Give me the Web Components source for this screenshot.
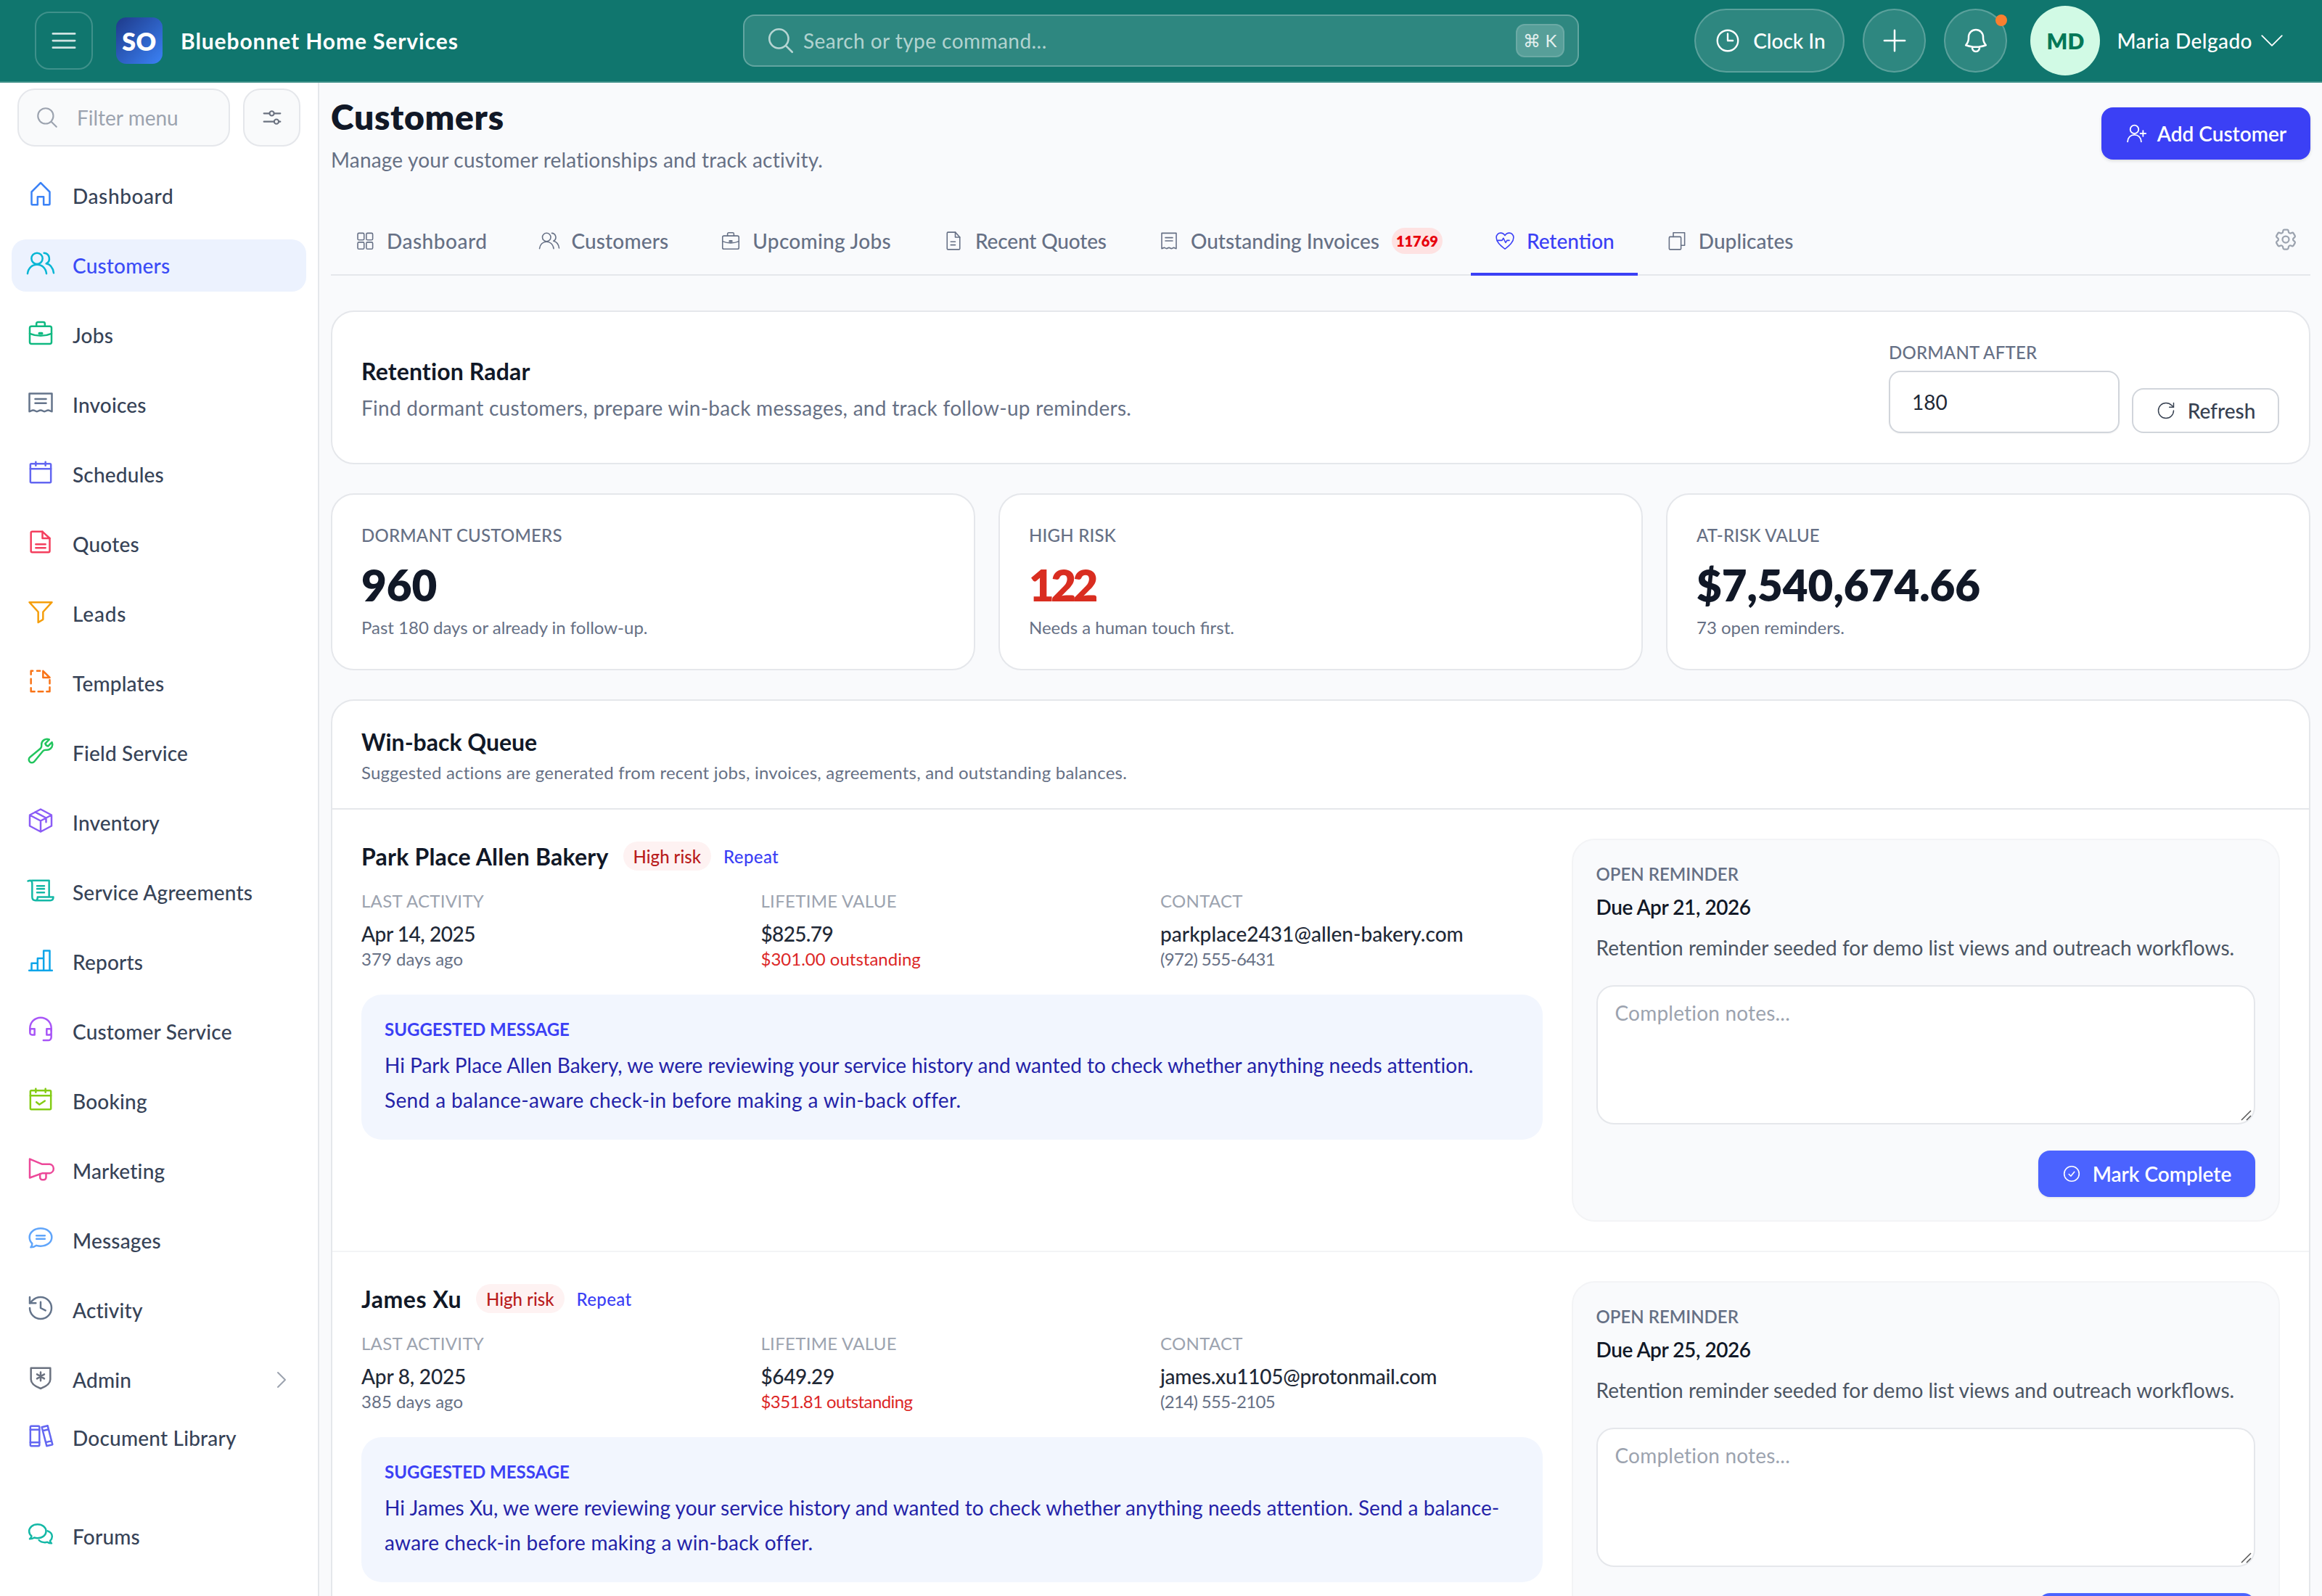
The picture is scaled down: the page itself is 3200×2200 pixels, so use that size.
<!DOCTYPE html>
<html lang="en"><head><meta charset="utf-8"><title>Customers</title>
<style>
html,body{margin:0;padding:0;height:2200px;overflow:hidden;background:#f9fafc}
body{font-family:Lato,"Liberation Sans",sans-serif;color:#111827}
</style></head><body>
<app-shell>
  <app-header slot="header" company="Bluebonnet Home Services" user="Maria Delgado" initials="MD"></app-header>
  <side-nav slot="side">
    <nav-item icon="home" color="#3b82f6" style="letter-spacing:.6px">Dashboard</nav-item>
    <nav-item icon="users" color="#06b6d4" active>Customers</nav-item>
    <nav-item icon="briefcase" color="#10b981">Jobs</nav-item>
    <nav-item icon="receipt" color="#64748b">Invoices</nav-item>
    <nav-item icon="calendar" color="#6366f1">Schedules</nav-item>
    <nav-item icon="doc" color="#f43f5e">Quotes</nav-item>
    <nav-item icon="funnel" color="#f59e0b" style="letter-spacing:.8px">Leads</nav-item>
    <nav-item icon="dashdoc" color="#f97316">Templates</nav-item>
    <nav-item icon="wrench" color="#22c55e">Field Service</nav-item>
    <nav-item icon="cube" color="#8b5cf6">Inventory</nav-item>
    <nav-item icon="scroll" color="#14b8a6">Service Agreements</nav-item>
    <nav-item icon="bars" color="#0ea5e9">Reports</nav-item>
    <nav-item icon="headset" color="#a855f7">Customer Service</nav-item>
    <nav-item icon="calcheck" color="#84cc16">Booking</nav-item>
    <nav-item icon="megaphone" color="#ec4899">Marketing</nav-item>
    <nav-item icon="chat" color="#60a5fa">Messages</nav-item>
    <nav-item icon="history" color="#64748b">Activity</nav-item>
    <nav-item icon="shield" color="#6b7280" chevron>Admin</nav-item>
    <nav-item icon="books" color="#6366f1" style="margin-top:-16px">Document Library</nav-item>
    <nav-item icon="forums" color="#14b8a6" style="margin-top:40px">Forums</nav-item>
  </side-nav>
  <page-head title="Customers" sub="Manage your customer relationships and track activity."></page-head>
  <tab-bar>
    <tab-item icon="grid" style="letter-spacing:.5px">Dashboard</tab-item>
    <tab-item icon="users" style="letter-spacing:.15px">Customers</tab-item>
    <tab-item icon="briefcase" style="letter-spacing:.3px">Upcoming Jobs</tab-item>
    <tab-item icon="doc2" style="letter-spacing:-.15px">Recent Quotes</tab-item>
    <tab-item icon="receipt2" badge="11769" style="letter-spacing:0">Outstanding Invoices</tab-item>
    <tab-item icon="heart" active style="letter-spacing:0">Retention</tab-item>
    <tab-item icon="copy" style="letter-spacing:.05px">Duplicates</tab-item>
  </tab-bar>
  <radar-card></radar-card>
  <stat-grid>
    <stat-card label="DORMANT CUSTOMERS" value="960" note="Past 180 days or already in follow-up."></stat-card>
    <stat-card label="HIGH RISK" value="122" note="Needs a human touch first." danger></stat-card>
    <stat-card label="AT-RISK VALUE" value="$7,540,674.66" note="73 open reminders."></stat-card>
  </stat-grid>
  <queue-card>
    <customer-row name="Park Place Allen Bakery" due="Due Apr 21, 2026">
      <meta-cell label="LAST ACTIVITY" value="Apr 14, 2025" sub="379 days ago" style="--ls:-.45px;--ss:.05px"></meta-cell>
      <meta-cell label="LIFETIME VALUE" value="$825.79" sub="$301.00 outstanding" red style="--ls:-.65px;--ss:0px"></meta-cell>
      <meta-cell label="CONTACT" value="parkplace2431@allen-bakery.com" sub="(972) 555-6431" style="--ls:.05px;--ss:-.65px"></meta-cell>
      <span slot="msg"><span style="letter-spacing:-.01px">Hi Park Place Allen Bakery, we were reviewing your service history and wanted to check whether anything needs attention.</span><br><span style="letter-spacing:.36px">Send a balance-aware check-in before making a win-back offer.</span></span>
    </customer-row>
    <customer-row name="James Xu" due="Due Apr 25, 2026" style="--nls:.55px">
      <meta-cell label="LAST ACTIVITY" value="Apr 8, 2025" sub="385 days ago" style="--ls:-.2px;--ss:.05px"></meta-cell>
      <meta-cell label="LIFETIME VALUE" value="$649.29" sub="$351.81 outstanding" red style="--ls:-.4px;--ss:-.6px"></meta-cell>
      <meta-cell label="CONTACT" value="james.xu1105@protonmail.com" sub="(214) 555-2105" style="--ls:-.25px;--ss:-.65px"></meta-cell>
      <span slot="msg"><span style="letter-spacing:.05px">Hi James Xu, we were reviewing your service history and wanted to check whether anything needs attention. Send a balance-</span><br><span style="letter-spacing:.25px">aware check-in before making a win-back offer.</span></span>
    </customer-row>
  </queue-card>
</app-shell>
<script>
const P={
 menu:'<path d="M3.75 6.75h16.5M3.75 12h16.5M3.75 17.25h16.5"/>',
 search:'<path d="m21 21-5.197-5.197m0 0A7.5 7.5 0 1 0 5.196 5.196a7.5 7.5 0 0 0 10.607 10.607Z"/>',
 sliders:'<path d="M4 8h5.5M14 8h6M4 16h10M18.5 16H20"/><circle cx="11.7" cy="8" r="2.2"/><circle cx="16.2" cy="16" r="2.2"/>',
 home:'<path d="M4.500 10.500 12 3l7.500 7.500V20.500a.6.6 0 0 1-.6.6H14.500v-6.600h-5v6.600H5.100a.6.6 0 0 1-.6-.6Z"/>',
 users:'<circle cx="9" cy="8" r="4.6"/><path d="M1.200 20.500c.5-4.600 3.700-7.500 7.800-7.500s7.300 2.900 7.800 7.500"/><path d="M14.800 3.500a4.600 4.600 0 0 1 1.800 8.700c3.400.7 5.600 3.700 6.200 7.800"/>',
 briefcase:'<rect x="3" y="6.500" width="18" height="14.500" rx="1.500"/><path d="M8.500 6.500V4.300c0-.7.5-1.300 1.300-1.300h4.400c.8 0 1.300.6 1.300 1.300v2.200M3 12.500c2.800 1.200 5.800 1.800 9 1.800s6.200-.6 9-1.800"/><path d="M11 12.300h2" stroke-width="2.200"/>',
 receipt:'<path d="M2.700 4.500h18.600v14.800c-1.600 0-1.600-1-3.100-1s-1.500 1-3.100 1-1.500-1-3.100-1-1.500 1-3.100 1-1.500-1-3.100-1-1.500 1-3.100 1Z"/><path d="M7.500 9h9M7.500 12.500h9"/>',
 calendar:'<rect x="3.500" y="5" width="17" height="15.500" rx=".8"/><path d="M3.500 9.200h17M8 3.500v3M16 3.500v3"/>',
 calcheck:'<rect x="3.500" y="5" width="17" height="15.500" rx=".8"/><path d="M3.500 9.200h17M8 3.500v3M16 3.500v3M8.500 14.500l2.500 2 4.500-3"/>',
 doc:'<path d="M5 3.500h8.500L19.500 9v10.500a1 1 0 0 1-1 1H5a1 1 0 0 1-1-1v-15a1 1 0 0 1 1-1Z"/><path d="M13.500 3.500V9h6M8 14h8M8 17h8"/>',
 dashdoc:'<path d="M5.500 3.500H4v3M4 10v4M4 17.500v3h3M10 20.500h4M17 20.500h2.500V17M19.500 14v-3M9 3.500h2.500"/><path d="M14 3.500 19.500 9H14Z"/>',
 funnel:'<path d="M2.700 4.300h18.600l-7.300 8v6.200l-4 2.500v-8.700Z"/>',
 wrench:'<path d="M21.750 6.750a4.500 4.500 0 0 1-4.884 4.484c-1.076-.091-2.264.071-2.950.904l-7.152 8.684a2.548 2.548 0 1 1-3.586-3.586l8.684-7.152c.833-.686.995-1.874.904-2.950a4.500 4.500 0 0 1 6.336-4.486l-3.276 3.276a3.004 3.004 0 0 0 2.250 2.250l3.276-3.276c.304.648.398 1.370.398 2.352Z"/>',
 cube:'<path d="M21 7.500 12 2.700 3 7.500v9l9 4.800 9-4.800ZM3 7.500l9 4.800 9-4.800M12 12.300v9M7.500 5l9 4.900v3.500"/>',
 scroll:'<path d="M1.500 4.500c2-.8 3.500-.5 3.500 2V17.500c0 1.800 1 3 2.800 3H20c1.600 0 2.500-1 2.500-2.800H9.500c0 1.500-.5 2.800-1.700 2.800M5 4h14v13.500M2 4.300C2.700 4 4 4 5 4"/><path d="M9 8.500h6M9 11h6M9 14h6"/>',
 bars:'<path d="M2.500 20.800h19M4.500 20.800v-6h5v6M9.500 20.800v-10h5v10M14.500 20.800V4.500h5v16.300"/>',
 headset:'<path d="M3.200 13V11a8.800 8.800 0 0 1 17.600 0v2"/><path d="M3.200 11.500H7v5H4.800a1.600 1.600 0 0 1-1.600-1.600ZM20.800 11.500H17v5h2.200a1.600 1.600 0 0 0 1.600-1.600V11.500ZM20.800 15v3.500a2.500 2.500 0 0 1-2.500 2.500h-4"/>',
 megaphone:'<path d="M3 4v15.500l10.500-3.800h6a3.800 3.800 0 0 0 0-7.500h-6.500Z"/><path d="M11.500 16.200v3a2 2 0 0 0 2 2h1a2 2 0 0 0 2-2v-3.500"/>',
 chat:'<path d="M12 3.800c5 0 9.200 2.900 9.200 7.300s-4.200 7.300-9.200 7.300c-1.200 0-2.400-.2-3.500-.5-1.300 1-2.900 1.500-4.700 1.500.8-.9 1.200-2 1.200-3.100C3.900 15.200 2.800 13.300 2.800 11.100 2.800 6.700 7 3.800 12 3.800Z"/><path d="M8.500 9.800h7M8.500 12.500h7"/>',
 history:'<path d="M3 12a9 9 0 1 0 9-9 9.750 9.750 0 0 0-6.740 2.740L3 8"/><path d="M3 3v5h5M12 7v5l4 2"/>',
 shield:'<path d="M4 4h16v9.500c0 3.800-4 6-8 7.500-4-1.500-8-3.700-8-7.500Z"/><path d="M12 7.500v7M9 9.200l6 3.600M15 9.200l-6 3.600"/>',
 books:'<rect x="3.500" y="4" width="7.500" height="16.500" rx=".8"/><path d="M3.500 7h7.500M3.500 17.500h7.500M13 5l4.800-1.200 4 15.500-4.800 1.200ZM13.800 8l4.800-1.200M16.500 17.500l4.500-1.200"/>',
 forums:'<path d="M9.500 3.800c-4 0-7 2.400-7 5.700 0 1.600.7 3 2 4-.2.900-.7 1.700-1.500 2.300 1.500 0 2.800-.4 3.800-1.100.8.300 1.700.4 2.700.4 4 0 7-2.400 7-5.600S13.500 3.800 9.500 3.800Z"/><path d="M17.800 9.200c2.200.8 3.700 2.600 3.700 4.600 0 1.400-.7 2.600-1.700 3.500.1.800.5 1.500 1.200 2.100-1.400 0-2.500-.3-3.400-1-.7.200-1.400.3-2.100.3-2 0-3.800-.7-4.900-1.900"/>',
 chev:'<path d="m8.250 4.500 7.500 7.500-7.500 7.500"/>',
 grid:'<rect x="4" y="3.500" width="7" height="7.500" rx="1.300"/><rect x="13.500" y="3.500" width="7" height="7.500" rx="1.300"/><rect x="4" y="13.500" width="7" height="7.500" rx="1.300"/><rect x="13.500" y="13.500" width="7" height="7.500" rx="1.300"/>',
 doc2:'<path d="M6 2.500h8l5 5.500v12.500a1 1 0 0 1-1 1H6a1 1 0 0 1-1-1v-17a1 1 0 0 1 1-1Z"/><path d="M14 2.500V8h5M9 13h5M9 16.500h5"/>',
 receipt2:'<path d="M4 3.500h16v17c-1.300 0-1.300-1-2.700-1s-1.300 1-2.600 1-1.400-1-2.700-1-1.400 1-2.700 1-1.300-1-2.600-1-1.400 1-2.700 1Z"/><path d="M8 8.500h8M8 12h8"/>',
 heart:'<path d="M12 21C6.500 16.500 2.500 13 2.500 8.300 2.500 5.300 4.700 3.300 7.300 3.300c1.900 0 3.600 1 4.700 2.800 1.100-1.800 2.800-2.800 4.700-2.800 2.600 0 4.800 2 4.800 5 0 4.700-4 8.200-9.500 12.700Z"/><path d="M4 11.500h4.800l1.500-2.500 2.400 5 1.600-2.500h2.500"/>',
 copy:'<rect x="3.500" y="7.500" width="13" height="14" rx="1"/><path d="M8 7.500V3h12.500v14H16.500"/>',
 clock:'<path d="M12 6v6h4.500m4.500 0a9 9 0 1 1-18 0 9 9 0 0 1 18 0Z"/>',
 plus:'<path d="M12 3.500v17M3.500 12h17"/>',
 bell:'<path d="M14.857 17.082a23.848 23.848 0 0 0 5.454-1.310A8.967 8.967 0 0 1 18 9.750V9A6 6 0 0 0 6 9v.750a8.967 8.967 0 0 1-2.312 6.022c1.733.640 3.560 1.085 5.455 1.310m5.714 0a24.255 24.255 0 0 1-5.714 0m5.714 0a3 3 0 1 1-5.714 0"/>',
 down:'<path d="m19.500 8.250-7.500 7.500-7.500-7.500"/>',
 refresh:'<path d="M21 12a9 9 0 1 1-9-9c2.520 0 4.930 1 6.740 2.740L21 8"/><path d="M21 3v5h-5"/>',
 useradd:'<circle cx="10" cy="7.500" r="4.600"/><path d="M2.500 21c.4-4.500 3.300-7.500 7.500-7.500s7.100 3 7.500 7.500M19.500 9v6M16.500 12h6"/>',
 check:'<circle cx="12" cy="12" r="9.500"/><path d="m8.500 12.500 2.500 2.500 4.500-5.500"/>',
 cog:'<path d="M9.594 3.940c.090-.542.560-.940 1.110-.940h2.593c.550 0 1.020.398 1.110.940l.213 1.281c.063.374.313.686.645.870.074.040.147.083.220.127.325.196.720.257 1.075.124l1.217-.456a1.125 1.125 0 0 1 1.370.490l1.296 2.247a1.125 1.125 0 0 1-.260 1.431l-1.003.827c-.293.241-.438.613-.430.992a7.723 7.723 0 0 1 0 .255c-.008.378.137.750.430.991l1.004.827c.424.350.534.955.260 1.430l-1.298 2.247a1.125 1.125 0 0 1-1.369.491l-1.217-.456c-.355-.133-.750-.072-1.076.124a6.470 6.470 0 0 1-.220.128c-.331.183-.581.495-.644.869l-.213 1.281c-.090.543-.560.940-1.110.940h-2.594c-.550 0-1.019-.398-1.110-.940l-.213-1.281c-.062-.374-.312-.686-.644-.870a6.520 6.520 0 0 1-.220-.127c-.325-.196-.720-.257-1.076-.124l-1.217.456a1.125 1.125 0 0 1-1.369-.490l-1.297-2.247a1.125 1.125 0 0 1 .260-1.431l1.004-.827c.292-.240.437-.613.430-.991a6.932 6.932 0 0 1 0-.255c.007-.380-.138-.751-.430-.992l-1.004-.827a1.125 1.125 0 0 1-.260-1.430l1.297-2.247a1.125 1.125 0 0 1 1.370-.491l1.216.456c.356.133.751.072 1.076-.124.072-.044.146-.086.220-.128.332-.183.582-.495.644-.869l.214-1.280Z"/><path d="M15 12a3 3 0 1 1-6 0 3 3 0 0 1 6 0Z"/>'
};
const define=(name,render)=>customElements.define(name,class extends HTMLElement{
  connectedCallback(){ if(this.shadowRoot) return; const r=this.attachShadow({mode:'open'}); r.innerHTML=render(this); }
});
const FF='Lato,"Liberation Sans",sans-serif';
define('ui-icon',h=>{
  const s=h.getAttribute('size')||40,c=h.getAttribute('color')||'currentColor',w=h.getAttribute('sw')||1.5;
  return `<style>:host{display:inline-flex;flex:none;width:${s}px;height:${s}px;color:${c}}svg{width:100%;height:100%;fill:none;stroke:currentColor;stroke-width:${w};stroke-linecap:round;stroke-linejoin:round;display:block}</style><svg viewBox="0 0 24 24">${P[h.getAttribute('name')]||''}</svg>`;
});
define('app-shell',()=>`<style>
:host{display:grid;width:3200px;height:2200px;grid-template-columns:440px 1fr;grid-template-rows:114px 1fr;overflow:hidden;background:#f9fafc;font-family:${FF}}
.h{grid-column:1/3;display:block}.s{display:block;min-height:0}
main{padding:0 16px;min-width:0;overflow:hidden;display:flex;flex-direction:column}
</style><div class="h"><slot name="header"></slot></div><div class="s"><slot name="side"></slot></div><main><slot></slot></main>`);
define('app-header',h=>`<style>
:host{display:flex;align-items:center;box-sizing:border-box;height:114px;background:#10766e;border-bottom:2px solid #3d8f88;color:#fff;font-family:${FF}}
.left{width:1024px;box-sizing:border-box;padding-left:48px;display:flex;align-items:center;flex:none}
.menu{width:80px;height:80px;box-sizing:border-box;border:2px solid rgba(255,255,255,.2);border-radius:20px;display:flex;align-items:center;justify-content:center;color:rgba(255,255,255,.8)}
.logo{width:64px;height:64px;margin-left:32px;border-radius:14px;background:linear-gradient(135deg,#1e3a8a,#3b82f6);display:flex;align-items:center;justify-content:center;font-weight:800;font-size:34px;letter-spacing:.5px}
.co{margin-left:25px;font-size:30px;font-weight:700;letter-spacing:.9px;white-space:nowrap}
.search{width:1152px;height:72px;flex:none;box-sizing:border-box;border:2px solid rgba(255,255,255,.25);background:rgba(255,255,255,.13);border-radius:16px;display:flex;align-items:center;padding:0 18px 0 29px;color:rgba(255,255,255,.65)}
.ph{margin-left:10px;font-size:28px;letter-spacing:.45px;flex:1}
.kbd{width:67px;height:46px;box-sizing:border-box;border:2px solid rgba(255,255,255,.12);background:rgba(255,255,255,.2);border-radius:12px;display:flex;align-items:center;justify-content:center;font-size:24px;color:rgba(255,255,255,.85)}
.right{margin-left:auto;padding-right:47px;display:flex;align-items:center;flex:none}
.pill{height:88px;box-sizing:border-box;border:2px solid rgba(255,255,255,.22);background:rgba(255,255,255,.13);border-radius:44px;display:flex;align-items:center;justify-content:center;position:relative}
.clock{width:207px;font-size:28px;font-weight:500;gap:16px}
.round{width:87px;margin-left:25px}
.dot{position:absolute;right:-2px;top:6px;width:16px;height:16px;border-radius:50%;background:#f97f2f}
.av{width:96px;height:96px;margin-left:32px;border-radius:50%;background:#d1fae5;color:#047857;font-weight:800;font-size:30px;display:flex;align-items:center;justify-content:center}
.name{margin-left:23px;font-size:28px;font-weight:500;white-space:nowrap;letter-spacing:.45px}
.ch{margin-left:5px}
</style>
<div class="left"><div class="menu"><ui-icon name="menu" size="44"></ui-icon></div><div class="logo">SO</div><div class="co">${h.getAttribute('company')}</div></div>
<div class="search"><ui-icon name="search" size="42"></ui-icon><div class="ph">Search or type command...</div><div class="kbd">⌘ K</div></div>
<div class="right"><div class="pill clock"><ui-icon name="clock" size="38"></ui-icon><span>Clock In</span></div>
<div class="pill round"><ui-icon name="plus" size="40"></ui-icon></div>
<div class="pill round"><ui-icon name="bell" size="40"></ui-icon><i class="dot"></i></div>
<div class="av">${h.getAttribute('initials')}</div><div class="name">${h.getAttribute('user')}</div><ui-icon class="ch" name="down" size="44" sw="1"></ui-icon></div>`);
define('side-nav',()=>`<style>
:host{display:block;box-sizing:border-box;width:440px;height:2086px;background:#fff;border-right:2px solid #e5e7eb;padding:8px 16px 0;overflow:hidden;font-family:${FF}}
.f{display:flex;gap:18px;padding:0 8px 0 8px;margin-bottom:32px}
.inp{width:293px;height:80px;box-sizing:border-box;border:2px solid #e5e7eb;background:#f9fafb;border-radius:24px;display:flex;align-items:center;padding-left:22px;color:#9ca3af;font-size:28px;gap:24px}
.btn{width:79px;height:80px;box-sizing:border-box;border:2px solid #e5e7eb;background:#f9fafb;border-radius:24px;display:flex;align-items:center;justify-content:center;color:#6b7280}
nav{display:flex;flex-direction:column;gap:24px}
</style><div class="f"><div class="inp"><ui-icon name="search" size="34" color="#9ca3af"></ui-icon><span>Filter menu</span></div><div class="btn"><ui-icon name="sliders" size="34" color="#6b7280"></ui-icon></div></div><nav><slot></slot></nav>`);
define('nav-item',h=>`<style>
:host{display:flex;align-items:center;height:72px;box-sizing:border-box;padding-left:20px;padding-right:18px;border-radius:20px;font-size:28px;font-weight:500;letter-spacing:.2px;color:#374357;${h.hasAttribute('active')?'background:#ecf2fe;color:#3b4cf6;':''}}
ui-icon{margin-right:24px;margin-top:-6px}
.c{margin:0 0 0 auto}
</style><ui-icon name="${h.getAttribute('icon')}" color="${h.getAttribute('color')}" size="40"></ui-icon><span><slot></slot></span>${h.hasAttribute('chevron')?'<ui-icon class="c" name="chev" size="32" color="#9ca3af"></ui-icon>':''}`);
define('page-head',h=>`<style>
:host{display:flex;justify-content:space-between;align-items:flex-start;height:170px;flex:none;font-family:${FF}}
h1{margin:19px 0 0;font-size:48px;line-height:56px;font-weight:800;color:#111827;letter-spacing:.7px}
p{margin:11px 0 0;font-size:28px;line-height:40px;color:#667085;letter-spacing:.2px}
.add{margin-top:34px;height:72px;width:288px;box-sizing:border-box;border-radius:16px;background:#3b40f5;color:#fff;font-size:28px;font-weight:600;display:flex;align-items:center;justify-content:center;gap:14px;box-shadow:0 2px 4px rgba(0,0,0,.12)}
</style><div><h1>${h.getAttribute('title')}</h1><p>${h.getAttribute('sub')}</p></div><div class="add"><ui-icon name="useradd" size="30" color="#fff"></ui-icon><span>Add Customer</span></div>`);
define('tab-bar',()=>`<style>
:host{display:flex;gap:7px;align-items:stretch;height:96px;box-sizing:border-box;border-bottom:2px solid #e5e7eb;font-family:${FF};flex:none}
.g{margin-left:auto;align-self:center;margin-right:16px;margin-top:-2px}
</style><slot></slot><ui-icon class="g" name="cog" size="36" color="#9ca3af"></ui-icon>`);
define('tab-item',h=>{const a=h.hasAttribute('active'),b=h.getAttribute('badge');return `<style>
:host{display:flex;align-items:center;height:96px;box-sizing:border-box;padding:0 32px;gap:15px;font-size:28px;font-weight:500;white-space:nowrap;letter-spacing:.35px;color:${a?'#3b40f5':'#667085'};${a?'border-bottom:4px solid #3b40f5;padding-top:4px;':''}}
.b{margin-left:2px;width:70px;height:36px;border-radius:18px;background:#fee2e2;color:#e7000b;font-size:20px;font-weight:800;display:flex;align-items:center;justify-content:center;letter-spacing:0}
</style><ui-icon name="${h.getAttribute('icon')}" size="30" sw="1.250"></ui-icon><span><slot></slot></span>${b?`<span class="b">${b}</span>`:''}`});
define('radar-card',()=>`<style>
:host{display:flex;justify-content:space-between;height:212px;box-sizing:border-box;margin-top:48px;background:#fff;border:2px solid #e5e7eb;border-radius:32px;padding:0 41px 0 40px;font-family:${FF};flex:none}
.l{align-self:center;padding-top:4px}
h2{margin:0 0 8px;font-size:32px;line-height:44px;font-weight:700;letter-spacing:.15px;color:#111827}
p{margin:0;font-size:28px;line-height:40px;color:#667085;letter-spacing:.28px}
.r{display:flex;align-items:flex-end;gap:17px;padding-bottom:41px}
label{display:block;font-size:24px;line-height:32px;font-weight:500;color:#667085;margin-bottom:9px;letter-spacing:.2px}
.i{width:318px;height:86px;box-sizing:border-box;border:2px solid #d1d5db;border-radius:16px;display:flex;align-items:center;padding-left:30px;font-size:28px;color:#1f2937;box-shadow:0 1px 2px rgba(0,0,0,.05)}
.b{width:203px;height:62px;box-sizing:border-box;border:2px solid #d1d5db;border-radius:16px;display:flex;align-items:center;justify-content:center;gap:16px;font-size:28px;font-weight:500;color:#374151}
</style><div class="l"><h2>Retention Radar</h2><p>Find dormant customers, prepare win-back messages, and track follow-up reminders.</p></div>
<div class="r"><div><label>DORMANT AFTER</label><div class="i">180</div></div><div class="b"><ui-icon name="refresh" size="28" sw="1.250"></ui-icon><span>Refresh</span></div></div>`);
define('stat-grid',()=>`<style>:host{display:grid;grid-template-columns:repeat(3,1fr);gap:32px;margin-top:40px;flex:none}</style><slot></slot>`);
define('stat-card',h=>`<style>
:host{display:block;height:244px;box-sizing:border-box;background:#fff;border:2px solid #e5e7eb;border-radius:32px;padding:40px 40px 0;font-family:${FF}}
.a{font-size:24px;line-height:32px;font-weight:500;color:#667085;letter-spacing:.2px}
.v{margin-top:16px;font-size:60px;line-height:72px;font-weight:800;color:${h.hasAttribute('danger')?'#d92d20':'#111827'};${h.hasAttribute('danger')?'letter-spacing:-4.5px;':''}}
.n{margin-top:7px;font-size:24px;line-height:32px;color:#667085}
</style><div class="a">${h.getAttribute('label')}</div><div class="v">${h.getAttribute('value')}</div><div class="n">${h.getAttribute('note')}</div>`);
define('queue-card',()=>`<style>
:host{display:block;margin-top:40px;background:#fff;border:2px solid #e5e7eb;border-radius:32px 32px 0 0;font-family:${FF};flex:none}
header{padding:35px 40px 33px;border-bottom:2px solid #e5e7eb}
h2{margin:0;font-size:32px;line-height:44px;font-weight:700;color:#111827}
p{margin:4px 0 0;font-size:24px;line-height:32px;color:#667085;letter-spacing:.22px}
</style><header><h2>Win-back Queue</h2><p>Suggested actions are generated from recent jobs, invoices, agreements, and outstanding balances.</p></header><slot></slot>`);
define('meta-cell',h=>`<style>
:host{display:block;min-width:0}
.a{font-size:24px;line-height:32px;color:#9ca3af;letter-spacing:.3px}
.v{margin-top:9px;font-size:28px;line-height:40px;font-weight:500;color:#1f2937;white-space:nowrap;letter-spacing:var(--ls,0)}
.s{font-size:24px;line-height:32px;color:${h.hasAttribute('red')?'#dc2626':'#667085'};margin-top:-1px;letter-spacing:var(--ss,0)}
</style><div class="a">${h.getAttribute('label')}</div><div class="v">${h.getAttribute('value')}</div><div class="s">${h.getAttribute('sub')}</div>`);
define('customer-row',h=>`<style>
:host{display:grid;grid-template-columns:5fr 3fr;gap:40px;padding:40px;border-bottom:2px solid #f3f4f6;font-family:${FF}}
.n{display:flex;align-items:center;height:52px;margin-top:-2px}
.t{font-size:32px;font-weight:700;color:#111827;margin-right:20px;letter-spacing:var(--nls,.22px)}
.r{height:40px;padding:0 14px;border-radius:20px;background:#fef2f2;color:#b91c1c;font-size:24px;font-weight:500;display:flex;align-items:center}
.p{margin-left:17px;color:#3b40f5;font-size:24px;font-weight:500;letter-spacing:.4px}
.m{display:grid;grid-template-columns:repeat(3,1fr);gap:24px;margin-top:20px}
.box{margin-top:33px;height:200px;box-sizing:border-box;background:#f2f6fe;border-radius:28px;padding:32px}
.bt{font-size:24px;line-height:32px;font-weight:700;color:#3b40f5}
.bm{margin-top:9px;font-size:28px;line-height:48px;color:#2423a8;white-space:nowrap}
.rem{box-sizing:border-box;height:528px;background:#f9fafc;border:2px solid #f3f4f6;border-radius:32px;padding:31px 32px}
.ra{font-size:24px;line-height:32px;font-weight:600;color:#667085}
.rd{margin-top:9px;font-size:28px;line-height:40px;font-weight:600;color:#111827;letter-spacing:-.45px}
.rt{margin-top:16px;font-size:28px;line-height:40px;color:#4b5563;white-space:nowrap}
.ta{position:relative;margin-top:32px;height:192px;box-sizing:border-box;background:#fff;border:2px solid #e5e7eb;border-radius:24px;padding:16px 24px;font-size:28px;line-height:40px;color:#9ca3af;letter-spacing:.2px}
.ta svg{position:absolute;right:2px;bottom:2px;width:20px;height:20px}
.bw{display:flex;justify-content:flex-end;margin-top:36px}
.mc{width:299px;height:64px;border-radius:16px;background:#4b63ff;color:#fff;font-size:28px;font-weight:600;display:flex;align-items:center;justify-content:center;gap:16px;box-shadow:0 1px 3px rgba(0,0,0,.1)}
</style><div><div class="n"><span class="t">${h.getAttribute('name')}</span><span class="r">High risk</span><span class="p">Repeat</span></div>
<div class="m"><slot></slot></div><div class="box"><div class="bt">SUGGESTED MESSAGE</div><div class="bm"><slot name="msg"></slot></div></div></div>
<div class="rem"><div class="ra">OPEN REMINDER</div><div class="rd">${h.getAttribute('due')}</div><div class="rt">Retention reminder seeded for demo list views and outreach workflows.</div>
<div class="ta">Completion notes...<svg viewBox="0 0 20 20"><path d="M5 18 18 5M12 18l6-6" stroke="#555" stroke-width="1.500" fill="none"/></svg></div>
<div class="bw"><div class="mc"><ui-icon name="check" size="26" color="#fff"></ui-icon><span>Mark Complete</span></div></div></div>`);
</script>
</body></html>
